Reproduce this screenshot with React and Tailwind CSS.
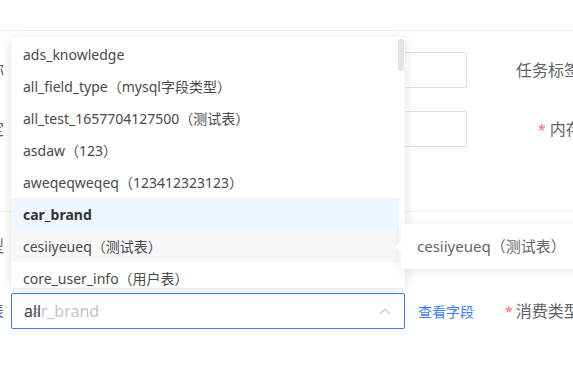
import React from "react";

const items = [
  { t: "ads_knowledge" },
  { t: "all_field_type（mysql字段类型）" },
  { t: "all_test_1657704127500（测试表）" },
  { t: "asdaw（123）" },
  { t: "aweqeqweqeq（123412323123）" },
  { t: "car_brand", sel: true },
  { t: "cesiiyeueq（测试表）", hover: true },
  { t: "core_user_info（用户表）" },
];

function Label({ children }) {
  return (
    <div className="w-[4px] overflow-hidden flex justify-end whitespace-nowrap text-[16px] text-[#606266] shrink-0">
      <span>{children}</span>
    </div>
  );
}

export default function App() {
  return (
    <div className="relative w-[573px] h-[384px] overflow-hidden bg-white font-['Noto_Sans','Noto_Sans_CJK_SC',sans-serif]">
      <div className="h-[31px] border-b border-[#ebeef5]" />

      <div className="mt-[21px] flex h-[36px] items-center">
        <Label>名称</Label>
        <div className="ml-[7px] h-[36px] w-[456px] shrink-0 rounded-[2px] border border-[#dcdfe6]" />
        <div className="ml-[49px] whitespace-nowrap text-[16px] text-[#606266]">任务标签</div>
      </div>

      <div className="mt-[23px] flex h-[36px] items-center">
        <Label>指定</Label>
        <div className="ml-[7px] h-[36px] w-[456px] shrink-0 rounded-[2px] border border-[#dcdfe6]" />
        <div className="ml-[71px] flex items-center whitespace-nowrap text-[16px] text-[#606266]">
          <span className="text-[#f56c6c] text-[14px] mr-[4px]">*</span>
          <span>内存</span>
        </div>
      </div>

      <div className="mt-[64px] border-t border-[#ebeef5]" />

      <div className="mt-[18px] flex h-[32px] items-center">
        <Label>类型</Label>
      </div>

      <div className="mt-[31px] flex h-[36px] items-center">
        <Label>表</Label>
        <div className="relative ml-[7px] flex h-[36px] w-[394px] shrink-0 items-center rounded-[2px] border border-[#3a7bfa] pl-[12px] pr-[12px]">
          <div className="relative flex-1 text-[16px] leading-none">
            <span className="absolute left-0 top-0 text-[#c0c4cc]">car_brand</span>
            <span className="relative text-[#4a4a4a]">all</span>
          </div>
          <svg width="12" height="8" viewBox="0 0 12 8" className="mr-[1px]">
            <path d="M1 7 L6 2 L11 7" fill="none" stroke="#c0c4cc" strokeWidth="1.2" />
          </svg>
        </div>
        <div className="ml-[13px] whitespace-nowrap text-[14px] text-[#3a7bfa]">查看字段</div>
        <div className="ml-[31px] flex items-center whitespace-nowrap text-[16px] text-[#606266]">
          <span className="text-[#f56c6c] text-[14px] mr-[3px]">*</span>
          <span>消费类型</span>
        </div>
      </div>

      {/* dropdown */}
      <div className="absolute left-[11px] top-[37px] h-[251px] w-[394px] overflow-hidden rounded-[4px] bg-white shadow-[0_2px_12px_rgba(0,0,0,0.12)]">
        <div className="pt-[1px]">
          {items.map((it) => (
            <div
              key={it.t}
              className={
                "mr-[6px] flex h-[32px] items-center whitespace-nowrap pl-[12px] text-[14px] " +
                (it.sel
                  ? "bg-[#eff6ff] font-bold text-[#333333]"
                  : it.hover
                  ? "bg-[#f7f7f7] text-[#4a4a4a]"
                  : "text-[#4a4a4a]")
              }
            >
              {it.t}
            </div>
          ))}
        </div>
        <div className="absolute right-[1px] top-[2px] h-[32px] w-[6px] rounded-[3px] bg-[#e3e3e3]" />
      </div>

      {/* tooltip */}
      <div className="absolute left-[401px] top-[224px] flex h-[45px] w-[190px] items-center rounded-[4px] bg-white pl-[16px] shadow-[0_2px_12px_rgba(0,0,0,0.1)]">
        <div className="absolute left-[-4px] top-[19px] h-[8px] w-[8px] rotate-45 bg-white" />
        <span className="relative whitespace-nowrap text-[15px] text-[#666666]">cesiiyeueq（测试表）</span>
      </div>
    </div>
  );
}
